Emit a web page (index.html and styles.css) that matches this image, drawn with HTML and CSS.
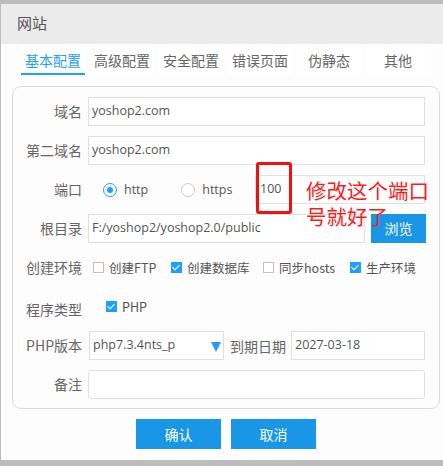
FILE: index.html
```html
<!DOCTYPE html>
<html>
<head>
<meta charset="utf-8">
<link rel="stylesheet" href="styles.css">
</head>
<body>
<div class="dialog">
  <div class="title">网站</div>
  <div class="tabs">
    <div class="tab active">基本配置</div>
    <div class="tab">高级配置</div>
    <div class="tab">安全配置</div>
    <div class="tab">错误页面</div>
    <div class="tab">伪静态</div>
    <div class="tab">其他</div>
  </div>
  <div class="panel">
    <div class="row">
      <div class="label">域名</div>
      <div class="input grow">yoshop2.com</div>
    </div>
    <div class="row">
      <div class="label">第二域名</div>
      <div class="input grow">yoshop2.com</div>
    </div>
    <div class="row">
      <div class="label">端口</div>
      <div class="radios">
        <span class="radio on"></span><span class="rtext">http</span>
        <span class="radio second"></span><span class="rtext">https</span>
      </div>
      <div class="input port">100</div>
    </div>
    <div class="row">
      <div class="label">根目录</div>
      <div class="input path">F:/yoshop2/yoshop2.0/public</div>
      <div class="btn browse">浏览</div>
    </div>
    <div class="row">
      <div class="label">创建环境</div>
      <div class="checks env">
        <div class="chk w1"><span class="cb"></span><span class="ctext">创建FTP</span></div>
        <div class="chk w2"><span class="cb on"></span><span class="ctext">创建数据库</span></div>
        <div class="chk w3"><span class="cb"></span><span class="ctext">同步hosts</span></div>
        <div class="chk"><span class="cb on"></span><span class="ctext">生产环境</span></div>
      </div>
    </div>
    <div class="row">
      <div class="label low">程序类型</div>
      <div class="checks type">
        <div class="chk"><span class="cb on"></span><span class="ctext">PHP</span></div>
      </div>
    </div>
    <div class="row">
      <div class="label">PHP版本</div>
      <div class="input select">php7.3.4nts_p<span class="arrow"></span></div>
      <div class="label2">到期日期</div>
      <div class="input date">2027-03-18</div>
    </div>
    <div class="row">
      <div class="label">备注</div>
      <div class="input grow rounded"></div>
    </div>
    <div class="redbox"></div>
    <div class="note">修改这个端口<br>号就好了</div>
  </div>
  <div class="actions">
    <div class="btn action">确认</div>
    <div class="btn action">取消</div>
  </div>
</div>
</body>
</html>
```
FILE: styles.css
```css
html, body {
  margin: 0;
  padding: 0;
}
body {
  background: #bcbcbc;
  width: 443px;
  height: 466px;
  overflow: hidden;
  font-family: "Noto Sans CJK SC", sans-serif;
  color: #555;
}
.dialog {
  margin: 4px 0 0 1px;
  width: 442px;
  height: 456px;
  background: #fdfdfd;
}
.title {
  height: 40px;
  background: #ebebeb;
  font-size: 15px;
  line-height: 38px;
  padding-left: 16px;
  color: #555;
}
.tabs {
  display: flex;
  gap: 5px;
  padding-left: 20px;
  height: 31px;
}
.tab {
  width: 64px;
  text-align: center;
  font-size: 14px;
  line-height: 33px;
  color: #666;
  background: #fff;
  box-sizing: border-box;
}
.tab.active {
  color: #1e9fff;
  border-bottom: 2px solid #1e9fff;
}
.panel {
  position: relative;
  margin: 11px 0 0 11px;
  width: 428px;
  height: 323px;
  box-sizing: border-box;
  border: 1px solid #dcdcdc;
  border-radius: 9px;
  padding: 10px 14px 0 0;
}
.row {
  display: flex;
  align-items: center;
  height: 29px;
  margin-bottom: 10px;
}
.label {
  width: 69px;
  flex: none;
  text-align: right;
  font-size: 14px;
  color: #666;
  margin-right: 6px;
  line-height: 29px;
}
.label.low {
  padding-top: 5px;
}
.input {
  height: 29px;
  box-sizing: border-box;
  border: 1px solid #e0e0e0;
  font-family: "Open Sans", "Noto Sans CJK SC", sans-serif;
  font-size: 12.5px;
  line-height: 26px;
  padding-left: 3px;
  color: #555;
  background: #fff;
  white-space: nowrap;
}
.grow {
  flex: 1;
}
.rounded {
  border-radius: 3px;
}
.radios {
  display: flex;
  align-items: center;
  width: 167px;
  flex: none;
}
.radio {
  width: 14px;
  height: 14px;
  box-sizing: border-box;
  border: 1px solid #c8c8c8;
  border-radius: 50%;
  margin-left: 15px;
  margin-right: 7px;
  position: relative;
  background: #fff;
  flex: none;
}
.radio.on {
  border-color: #1e9fff;
}
.radio.on::after {
  content: "";
  position: absolute;
  left: 3px;
  top: 3px;
  width: 6px;
  height: 6px;
  border-radius: 50%;
  background: #1e9fff;
}
.radio.second {
  margin-left: 33px;
}
.rtext {
  font-family: "Open Sans", sans-serif;
  font-size: 12.5px;
  color: #555;
  white-space: nowrap;
}
.port {
  flex: 1;
  padding-left: 4px;
}
.path {
  width: 277px;
  flex: none;
}
.btn {
  background: #1a96e6;
  color: #fff;
  text-align: center;
}
.browse {
  width: 55px;
  height: 29px;
  line-height: 29px;
  margin-left: 6px;
  font-size: 14px;
  flex: none;
}
.checks {
  display: flex;
  align-items: center;
  font-size: 12.5px;
  flex: none;
  white-space: nowrap;
}
.checks.env {
  padding-left: 5px;
}
.checks.type {
  padding-left: 18px;
}
.chk {
  display: flex;
  align-items: center;
  flex: none;
}
.w1 { width: 78px; }
.w2 { width: 92px; }
.w3 { width: 87px; }
.cb {
  width: 11px;
  height: 11px;
  box-sizing: border-box;
  border: 1px solid #c0c0c0;
  background: #fff;
  position: relative;
  margin-right: 5px;
  flex: none;
}
.cb.on {
  border: none;
  background: #1e9fff;
}
.cb.on::after {
  content: "";
  position: absolute;
  left: 3px;
  top: 1px;
  width: 3px;
  height: 6px;
  border: solid #fff;
  border-width: 0 1.5px 1.5px 0;
  transform: rotate(45deg);
}
.ctext {
  color: #555;
}
.select {
  width: 135px;
  flex: none;
  position: relative;
  margin-left: 1px;
}
.arrow {
  position: absolute;
  right: 2px;
  top: 10px;
  width: 0;
  height: 0;
  border-left: 5px solid transparent;
  border-right: 5px solid transparent;
  border-top: 10px solid #1e9fff;
}
.label2 {
  font-size: 14px;
  color: #666;
  margin: 0 5px 0 6px;
  white-space: nowrap;
}
.date {
  flex: 1;
}
.redbox {
  position: absolute;
  left: 243px;
  top: 75px;
  width: 36px;
  height: 52px;
  box-sizing: border-box;
  border: 3px solid #f01010;
  border-radius: 3px;
}
.note {
  position: absolute;
  left: 293px;
  top: 90px;
  font-size: 20.5px;
  line-height: 26px;
  color: #ff1a1a;
  white-space: nowrap;
}
.actions {
  display: flex;
  justify-content: center;
  gap: 10px;
  padding: 10px 0 0 8px;
}
.action {
  width: 85px;
  height: 30px;
  line-height: 30px;
  font-size: 14px;
}
```
